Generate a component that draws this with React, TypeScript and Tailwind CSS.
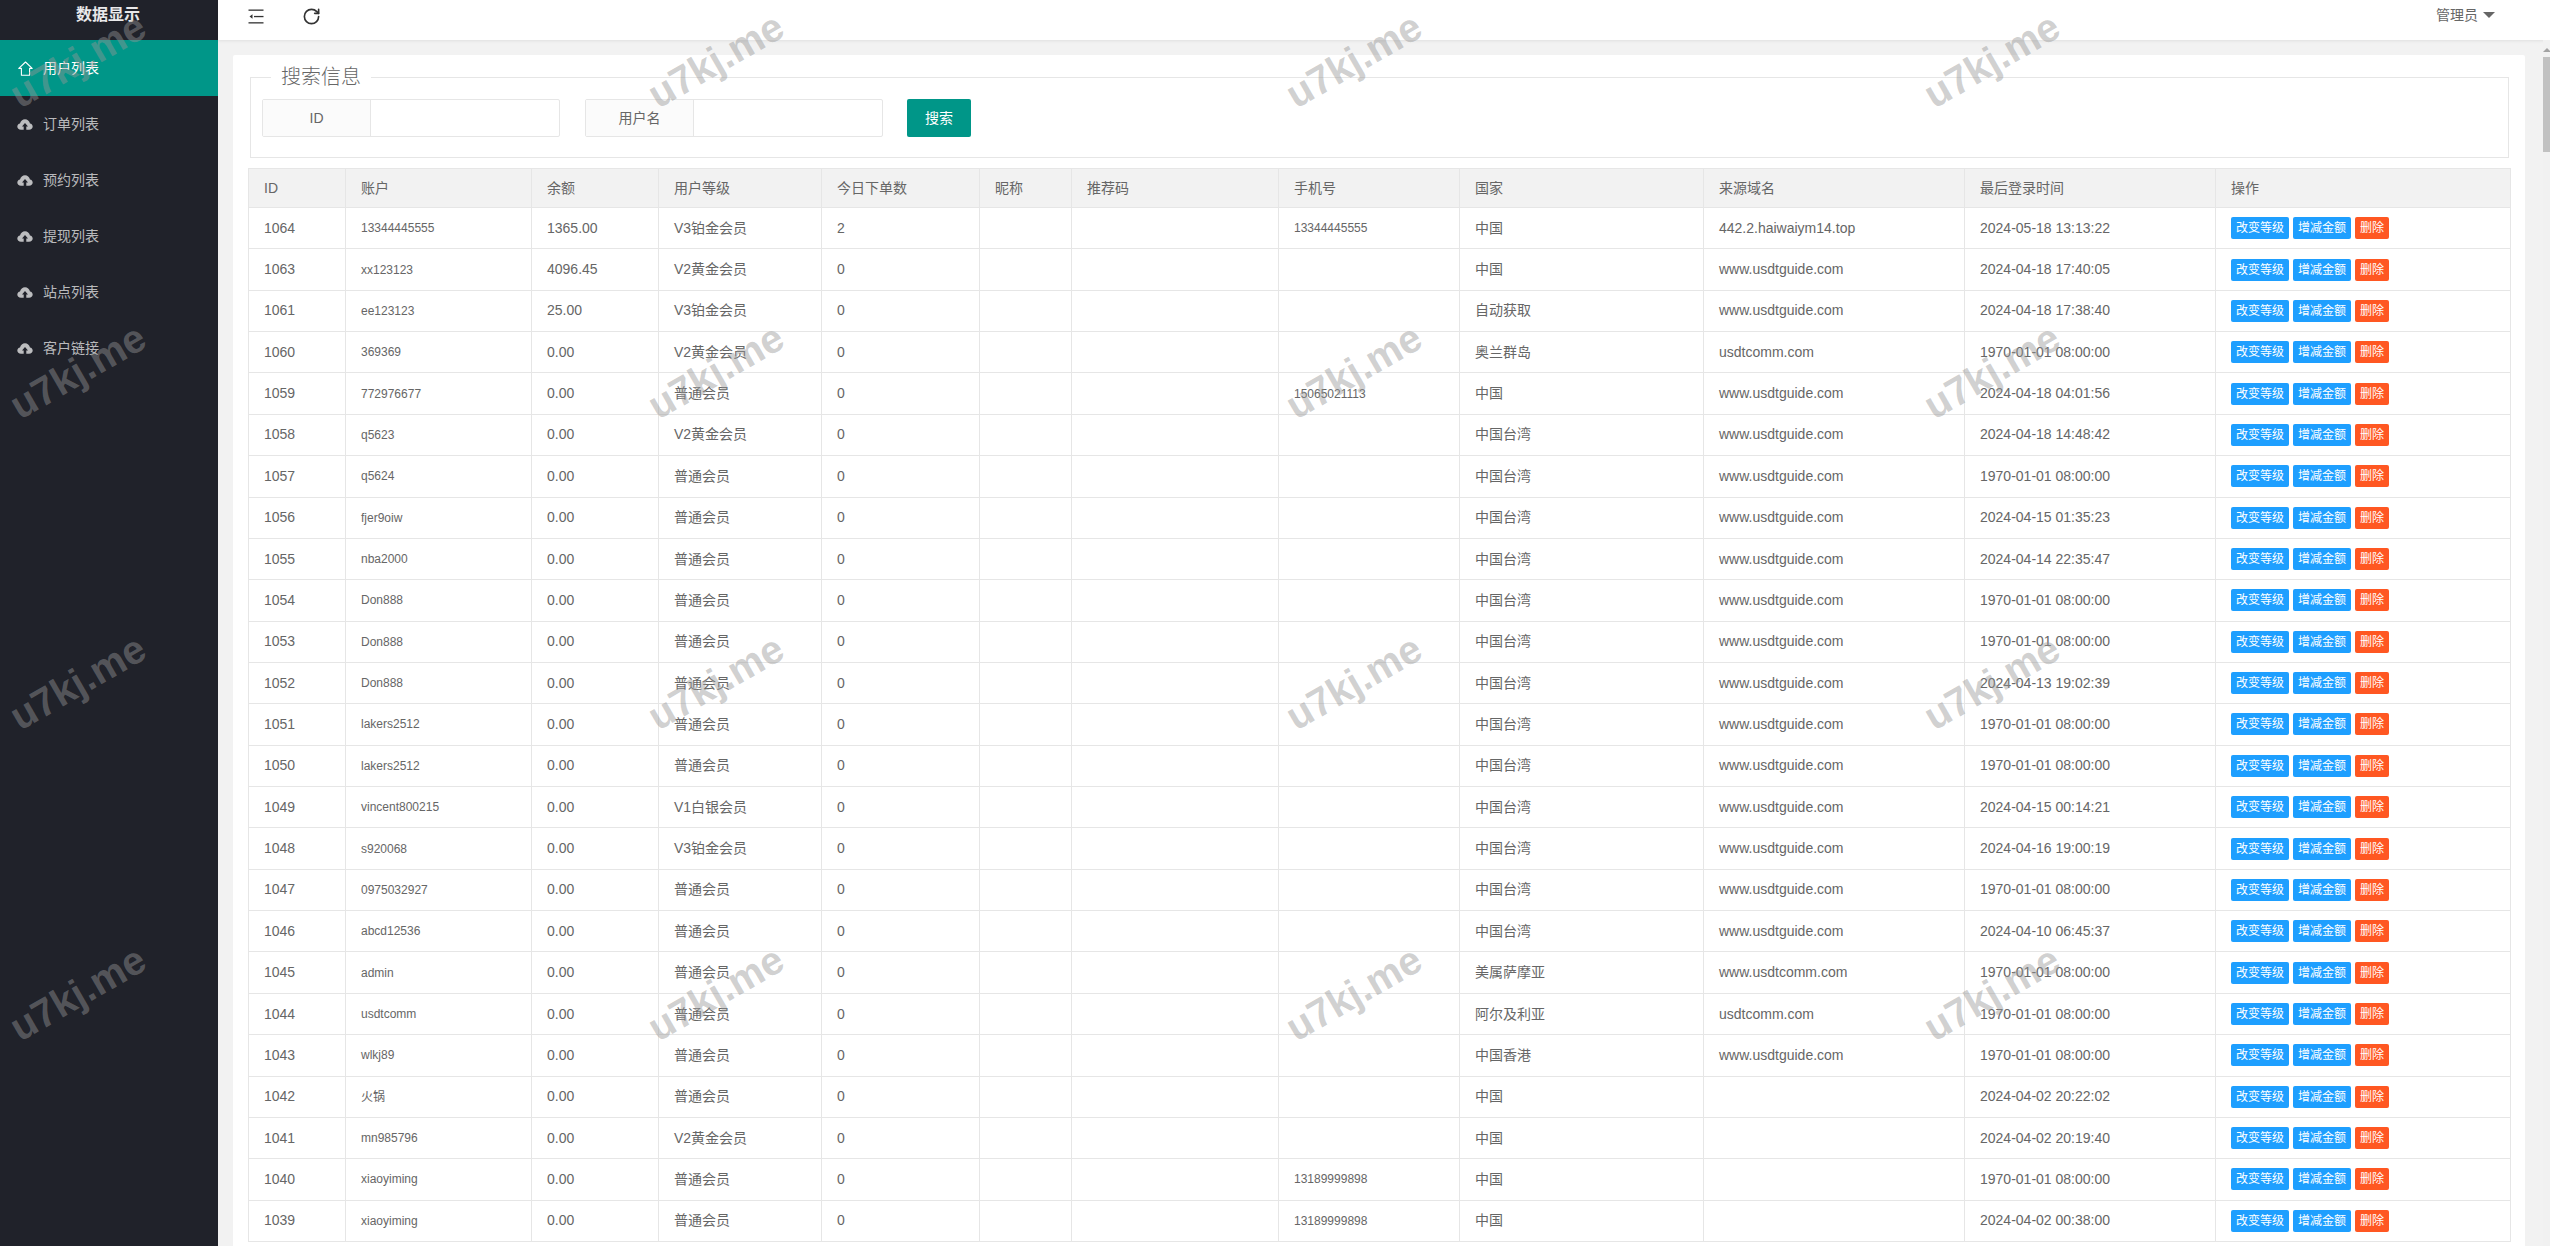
import React from 'react';
import { RotateCw } from 'lucide-react';

const FONT = '"Liberation Sans", "Noto Sans CJK SC", sans-serif';

const menu = ['订单列表', '预约列表', '提现列表', '站点列表', '客户链接'];

const columns = [
    { title: 'ID', width: 97 },
    { title: '账户', width: 186 },
    { title: '余额', width: 127 },
    { title: '用户等级', width: 163 },
    { title: '今日下单数', width: 158 },
    { title: '昵称', width: 92 },
    { title: '推荐码', width: 207 },
    { title: '手机号', width: 181 },
    { title: '国家', width: 244 },
    { title: '来源域名', width: 261 },
    { title: '最后登录时间', width: 251 },
    { title: '操作', width: 295 },
];

const G = 'www.usdtguide.com';
const E = '1970-01-01 08:00:00';
const P = '普通会员';
const T = '中国台湾';

// id, account, balance, level, orders, phone, country, domain, last login
const users: string[][] = [
    ['1064', '13344445555', '1365.00', 'V3铂金会员', '2', '13344445555', '中国', '442.2.haiwaiym14.top', '2024-05-18 13:13:22'],
    ['1063', 'xx123123', '4096.45', 'V2黄金会员', '0', '', '中国', G, '2024-04-18 17:40:05'],
    ['1061', 'ee123123', '25.00', 'V3铂金会员', '0', '', '自动获取', G, '2024-04-18 17:38:40'],
    ['1060', '369369', '0.00', 'V2黄金会员', '0', '', '奥兰群岛', 'usdtcomm.com', E],
    ['1059', '772976677', '0.00', P, '0', '15065021113', '中国', G, '2024-04-18 04:01:56'],
    ['1058', 'q5623', '0.00', 'V2黄金会员', '0', '', T, G, '2024-04-18 14:48:42'],
    ['1057', 'q5624', '0.00', P, '0', '', T, G, E],
    ['1056', 'fjer9oiw', '0.00', P, '0', '', T, G, '2024-04-15 01:35:23'],
    ['1055', 'nba2000', '0.00', P, '0', '', T, G, '2024-04-14 22:35:47'],
    ['1054', 'Don888', '0.00', P, '0', '', T, G, E],
    ['1053', 'Don888', '0.00', P, '0', '', T, G, E],
    ['1052', 'Don888', '0.00', P, '0', '', T, G, '2024-04-13 19:02:39'],
    ['1051', 'lakers2512', '0.00', P, '0', '', T, G, E],
    ['1050', 'lakers2512', '0.00', P, '0', '', T, G, E],
    ['1049', 'vincent800215', '0.00', 'V1白银会员', '0', '', T, G, '2024-04-15 00:14:21'],
    ['1048', 's920068', '0.00', 'V3铂金会员', '0', '', T, G, '2024-04-16 19:00:19'],
    ['1047', '0975032927', '0.00', P, '0', '', T, G, E],
    ['1046', 'abcd12536', '0.00', P, '0', '', T, G, '2024-04-10 06:45:37'],
    ['1045', 'admin', '0.00', P, '0', '', '美属萨摩亚', 'www.usdtcomm.com', E],
    ['1044', 'usdtcomm', '0.00', P, '0', '', '阿尔及利亚', 'usdtcomm.com', E],
    ['1043', 'wlkj89', '0.00', P, '0', '', '中国香港', G, E],
    ['1042', '火锅', '0.00', P, '0', '', '中国', '', '2024-04-02 20:22:02'],
    ['1041', 'mn985796', '0.00', 'V2黄金会员', '0', '', '中国', '', '2024-04-02 20:19:40'],
    ['1040', 'xiaoyiming', '0.00', P, '0', '13189999898', '中国', '', E],
    ['1039', 'xiaoyiming', '0.00', P, '0', '13189999898', '中国', '', '2024-04-02 00:38:00'],
];

const HomeIcon = () => (
    <svg width="15" height="15" viewBox="0 0 15 15" fill="none" stroke="currentColor" strokeWidth="1.1" className="shrink-0">
        <path d="M.8 7.4 7.5 1l6.7 6.4h-2.6v6.8H3.4V7.4z" strokeLinejoin="round" />
    </svg>
);

const CloudIcon = () => (
    <svg width="16" height="11" viewBox="0 0 16 11" fill="currentColor" className="shrink-0">
        <path
            fillRule="evenodd"
            d="M4 10.7C1.8 10.7.3 9.3.3 7.5c0-1.6 1.2-2.9 2.7-3.1C3.600 2 5.600.3 8 .3s4.400 1.700 5 4.100c1.500.2 2.700 1.500 2.700 3.100 0 1.800-1.500 3.200-3.700 3.200H9.300V7.400H11L8 4 5 7.400h1.700v3.300z"
        />
    </svg>
);

const ShrinkIcon = () => (
    <svg width="16" height="15" viewBox="0 0 16 15" className="shrink-0 text-[#333]" fill="currentColor">
        <rect x="0.500" y="0.500" width="15" height="1.300" />
        <rect x="0.500" y="13.200" width="15" height="1.300" />
        <rect x="6" y="6.900" width="9.500" height="1.300" />
        <path d="M1.500 7.500 4.500 5.300v4.400z" />
    </svg>
);

const Sidebar = () => (
    <aside className="w-[218px] shrink-0 bg-[#20222a] text-[14px] text-white/70">
        <div className="h-[40px] pb-[10px] pr-[2px] flex items-center justify-center text-[16px] font-bold text-white/90">数据显示</div>
        <div className="h-[56px] bg-[#009688] text-white flex items-center pl-[18px] gap-[10px]">
            <HomeIcon />
            <span>用户列表</span>
        </div>
        {menu.map((label) => (
            <div key={label} className="h-[56px] flex items-center pl-[17px] gap-[10px]">
                <CloudIcon />
                <span>{label}</span>
            </div>
        ))}
    </aside>
);

const Topbar = () => (
    <header className="h-[40px] shrink-0 bg-white shadow-[0_1px_3px_rgba(0,0,0,0.08)] relative flex items-start justify-between pl-[30px] pr-[55px] text-[14px] text-[#666]">
        <div className="h-[32px] flex items-center gap-[38px]">
            <ShrinkIcon />
            <RotateCw size={19} strokeWidth={2.1} className="text-[#333]" />
        </div>
        <div className="h-[30px] flex items-center gap-[5px]">
            <span>管理员</span>
            <span className="w-0 h-0 border-x-[6px] border-x-transparent border-t-[6px] border-t-[#666]"></span>
        </div>
    </header>
);

const SearchField = ({ label }: { label: string }) => (
    <div className="w-[298px] h-[38px] flex border border-[#e6e6e6] rounded-[2px] bg-white">
        <div className="w-[108px] bg-[#fbfbfb] border-r border-[#e6e6e6] flex items-center justify-center">{label}</div>
        <div className="flex-1"></div>
    </div>
);

const ActionButton = ({ label, color }: { label: string; color: string }) => (
    <button className={`h-[22px] px-[5px] rounded-[2px] text-[12px] leading-[22px] text-white ${color}`}>{label}</button>
);

const UserTable = () => (
    <table className="w-[2262px] table-fixed border-collapse text-[14px] text-[#666]">
        <colgroup>
            {columns.map((col) => (
                <col key={col.title} style={{ width: col.width }} />
            ))}
        </colgroup>
        <thead>
            <tr className="h-[39px] bg-[#f2f2f2]">
                {columns.map((col) => (
                    <th key={col.title} className="border border-[#e6e6e6] px-[15px] text-left font-normal">{col.title}</th>
                ))}
            </tr>
        </thead>
        <tbody>
            {users.map((u) => (
                <tr key={u[0]} className="h-[41.36px]">
                    <td className="border border-[#e6e6e6] px-[15px]">{u[0]}</td>
                    <td className="border border-[#e6e6e6] px-[15px] text-[12px]">{u[1]}</td>
                    <td className="border border-[#e6e6e6] px-[15px]">{u[2]}</td>
                    <td className="border border-[#e6e6e6] px-[15px]">{u[3]}</td>
                    <td className="border border-[#e6e6e6] px-[15px]">{u[4]}</td>
                    <td className="border border-[#e6e6e6] px-[15px]"></td>
                    <td className="border border-[#e6e6e6] px-[15px]"></td>
                    <td className="border border-[#e6e6e6] px-[15px] text-[12px]">{u[5]}</td>
                    <td className="border border-[#e6e6e6] px-[15px]">{u[6]}</td>
                    <td className="border border-[#e6e6e6] px-[15px]">{u[7]}</td>
                    <td className="border border-[#e6e6e6] px-[15px]">{u[8]}</td>
                    <td className="border border-[#e6e6e6] px-[15px]">
                        <div className="flex gap-[4px]">
                            <ActionButton label="改变等级" color="bg-[#1e9fff]" />
                            <ActionButton label="增减金额" color="bg-[#1e9fff]" />
                            <ActionButton label="删除" color="bg-[#ff5722]" />
                        </div>
                    </td>
                </tr>
            ))}
        </tbody>
    </table>
);

const Watermark = () => (
    <div className="absolute left-[-242px] top-[-96px] grid grid-cols-[repeat(4,638px)] auto-rows-[311px] pointer-events-none">
        {Array.from({ length: 16 }).map((_, i) => (
            <div key={i} className="flex items-center justify-center">
                <span className="-rotate-[30deg] text-[40px] font-bold text-[rgba(150,150,150,0.45)] whitespace-nowrap">u7kj.me</span>
            </div>
        ))}
    </div>
);

export default function App() {
    return (
        <div className="relative h-screen flex overflow-hidden" style={{ fontFamily: FONT }}>
            <Sidebar />
            <main className="flex-1 min-w-0 flex flex-col">
                <Topbar />
                <div className="flex-1 min-h-0 flex bg-[#f2f2f2]">
                    <div className="flex-1 min-w-0 pt-[15px] pl-[15px] pr-[18px]">
                        <div className="bg-white rounded-[2px] pt-[8px] px-[15px] pb-[15px]">
                            <fieldset className="mx-[2px] w-[2259px] h-[95px] border border-[#e6e6e6] px-[11px] text-[14px] text-[#666]">
                                <legend className="ml-[9px] px-[10px] text-[20px] leading-[28px] font-light text-[#666]">搜索信息</legend>
                                <div className="mt-[8px] flex">
                                    <SearchField label="ID" />
                                    <div className="w-[25px]"></div>
                                    <SearchField label="用户名" />
                                    <div className="w-[24px]"></div>
                                    <button className="w-[64px] h-[38px] rounded-[2px] bg-[#009688] text-white">搜索</button>
                                </div>
                            </fieldset>
                            <div className="mt-[10px]">
                                <UserTable />
                            </div>
                        </div>
                    </div>
                    <div className="w-[7px] shrink-0 bg-[#f1f1f1] pt-[17px] relative">
                        <div className="h-[95px] bg-[#c1c1c1]"></div>
                        <div className="absolute top-[8px] left-0 w-0 h-0 border-x-[4px] border-x-transparent border-b-[4px] border-b-[#a3a3a3]"></div>
                    </div>
                </div>
            </main>
            <Watermark />
        </div>
    );
}
